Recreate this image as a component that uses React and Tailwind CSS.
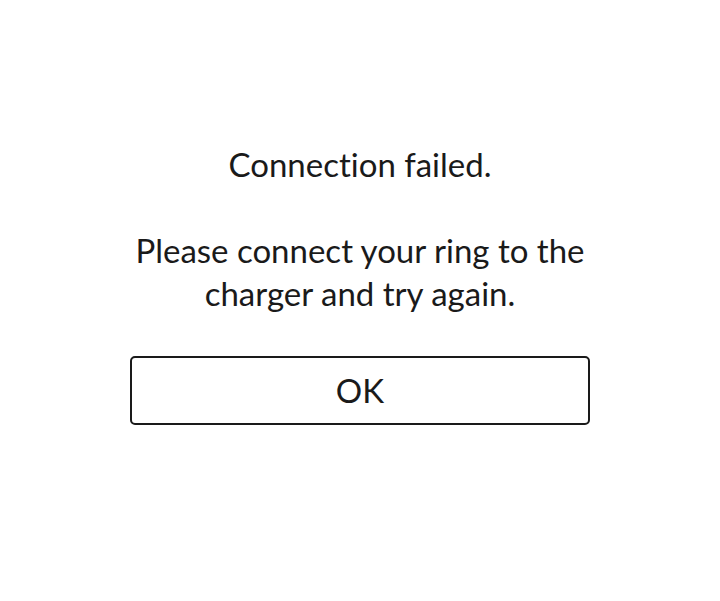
export default function App() {
  return (
    <div className="w-[720px] h-[601px] bg-white flex flex-col items-center text-[#1a1a1a] [font-variant-ligatures:none]" style={{ fontFamily: "Lato, 'Noto Sans', sans-serif" }}>
      <div className="mt-[143px] text-[33px] leading-[43px] text-center">Connection failed.</div>
      <div className="mt-[43px] text-[33px] leading-[43px] text-center">Please connect your ring to the<br />charger and try again.</div>
      <button className="mt-[41px] w-[460px] h-[69px] border-2 border-[#1a1a1a] rounded-[5px] text-[33px] flex items-center justify-center">OK</button>
    </div>
  );
}
